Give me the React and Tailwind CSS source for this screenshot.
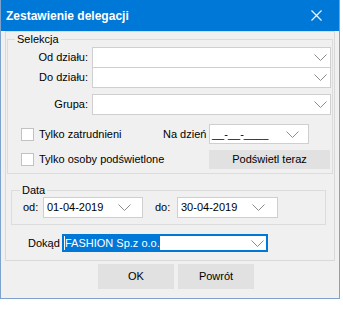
import React from "react";

function Chevron({ className = "" }) {
  return (
    <svg width="13" height="7" viewBox="0 0 13 7" className={className}>
      <path d="M0.5 0.5 L6.5 6.5 L12.5 0.5" fill="none" stroke="#8c8c8c" strokeWidth="1" />
    </svg>
  );
}

function Combo({ className = "", text = "", textClass = "pl-[3px]", chevronClass = "mr-[3px]" }) {
  return (
    <div className={`flex items-center justify-between bg-white border border-[#cfcfcf] ${className}`}>
      <span className={textClass}>{text}</span>
      <Chevron className={chevronClass} />
    </div>
  );
}

function Check({ label, className = "" }) {
  return (
    <div className={`flex items-center gap-[5px] ${className}`}>
      <span className="w-[13px] h-[13px] bg-white border border-[#c2c2c2]" />
      <span>{label}</span>
    </div>
  );
}

export default function App() {
  return (
    <div className="w-[343px] h-[310px] bg-white text-[11px] text-black font-['Liberation_Sans',Arial,sans-serif]">
      <div className="w-[340px] h-[299px] flex flex-col bg-[#f0f0f0] border-x border-b border-[#7da2ce]">
        {/* title bar */}
        <div className="h-[31px] shrink-0 bg-[#0078d7] flex items-center justify-between pl-[5px] pr-[17px] text-white text-[12px] font-bold">
          <span>Zestawienie delegacji</span>
          <svg width="11" height="11" viewBox="0 0 11 11">
            <path d="M0.5 0.5 L10.5 10.5 M10.5 0.5 L0.5 10.5" stroke="#ffffff" strokeWidth="1.1" />
          </svg>
        </div>

        <div className="mx-[4px] h-[230px] shrink-0 border border-[#d9d9d9]">
          {/* Selekcja */}
          <fieldset className="mx-[1px] border border-[#dcdcdc] pb-[4px]">
            <legend className="ml-[7px] px-[2px] leading-[14px]">Selekcja</legend>
            <div className="flex items-center mt-[1px]">
              <span className="w-[80px] text-right">Od działu:</span>
              <Combo className="ml-[4px] w-[239px] h-[21px]" />
            </div>
            <div className="flex items-center -mt-px">
              <span className="w-[80px] text-right">Do działu:</span>
              <Combo className="ml-[4px] w-[239px] h-[21px]" />
            </div>
            <div className="flex items-center mt-[6px]">
              <span className="w-[80px] text-right">Grupa:</span>
              <Combo className="ml-[4px] w-[239px] h-[21px]" />
            </div>
            <div className="flex items-center mt-[9px] pl-[13px] h-[20px]">
              <Check label="Tylko zatrudnieni" className="w-[142px]" />
              <span className="w-[46px]">Na dzień</span>
              <Combo className="w-[100px] h-[20px]" text="__-__-____" textClass="pl-[2px]" chevronClass="mr-[9px]" />
            </div>
            <div className="flex items-center mt-[6px] pl-[13px] h-[19px]">
              <Check label="Tylko osoby podświetlone" className="w-[188px]" />
              <button className="w-[121px] h-[19px] bg-[#e1e1e1] leading-[19px]">Podświetl teraz</button>
            </div>
          </fieldset>

          {/* Data */}
          <fieldset className="mt-[9px] ml-[5px] w-[315px] border border-[#dcdcdc] pb-[6px]">
            <legend className="ml-[8px] px-[2px] leading-[14px]">Data</legend>
            <div className="flex items-center pl-[11px]">
              <span className="w-[20px]">od:</span>
              <Combo className="w-[100px] h-[21px]" text="01-04-2019" chevronClass="mr-[11px]" />
              <span className="ml-[12px] w-[22px]">do:</span>
              <Combo className="w-[101px] h-[21px]" text="30-04-2019" chevronClass="mr-[12px]" />
            </div>
          </fieldset>

          {/* Dokąd */}
          <div className="flex items-center mt-[9px] pl-[22px]">
            <span className="w-[34px]">Dokąd</span>
            <div className="w-[206px] h-[18px] flex items-center justify-between bg-white border-2 border-[#0078d7]">
              <span className="ml-px bg-[#0078d7] text-white leading-[14px]">FASHION Sp.z o.o.</span>
              <Chevron className="mr-[2px]" />
            </div>
          </div>
        </div>

        <div className="flex gap-[4px] mt-[3px] pl-[97px]">
          <button className="w-[76px] h-[25px] bg-[#e1e1e1]">OK</button>
          <button className="w-[76px] h-[25px] bg-[#e1e1e1]">Powrót</button>
        </div>
      </div>
    </div>
  );
}
